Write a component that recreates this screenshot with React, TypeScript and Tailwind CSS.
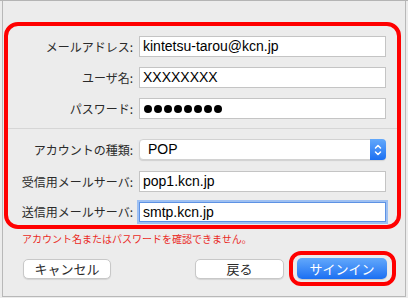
import React from "react";

const jp = "font-['Noto_Sans_CJK_JP','Noto_Sans',sans-serif]";
const lat = "font-['Liberation_Sans','Noto_Sans_CJK_JP',sans-serif]";

function Row({ label, children, mt }: { label: string; children: React.ReactNode; mt: string }) {
  return (
    <div className={`flex items-center ${mt}`}>
      <div className={`w-[125px] text-right text-[12px] leading-[14px] text-[#2a2a2a] ${jp}`}>{label}</div>
      <div className="ml-[6px]">{children}</div>
    </div>
  );
}

function Input({ children, focused, h = "h-[21px]" }: { children: React.ReactNode; focused?: boolean; h?: string }) {
  return (
    <div
      className={`w-[247px] ${h} bg-white flex items-center pl-[3px] text-[14px] text-black ${lat} ${
        focused ? "border border-[#5d92e4] ring-2 ring-[#9ec0f2]" : "border border-[#c4c4c4]"
      }`}
    >
      {children}
    </div>
  );
}

export default function App() {
  return (
    <div className="w-[408px] h-[298px] bg-[#ececec] border-t border-[#b4b4b4] overflow-hidden">
      <div className="ml-[2px] w-[404px] h-[296px] border-x border-b border-[#b8b8b8] flex flex-col">
        <div className="mt-[21px] ml-[1px] w-[397px] h-[207px] border-4 border-[#ff0000] rounded-[14px] flex flex-col pt-[10px]">
          <Row label="メールアドレス:" mt="">
            <Input>kintetsu-tarou@kcn.jp</Input>
          </Row>
          <Row label="ユーザ名:" mt="mt-[10px]">
            <Input>XXXXXXXX</Input>
          </Row>
          <Row label="パスワード:" mt="mt-[10px]">
            <Input>
              <div className="flex gap-[2px] pl-[1px]">
                {Array.from({ length: 8 }).map((_, i) => (
                  <span key={i} className="w-[8px] h-[8px] rounded-full bg-black" />
                ))}
              </div>
            </Input>
          </Row>
          <div className="mt-[9px] h-px bg-[#d6d6d6]" />
          <Row label="アカウントの種類:" mt="mt-[10px]">
            <div className="w-[247px] h-[21px] bg-white rounded-[4px] border border-[#d2d2d2] shadow-[0_1px_1px_rgba(0,0,0,0.12)] flex items-center justify-between">
              <span className={`pl-[8px] text-[14px] text-black ${lat}`}>POP</span>
              <div className="w-[16px] h-[21px] -mr-px rounded-r-[4px] bg-gradient-to-b from-[#62a8fb] to-[#1a6ff2] flex items-center justify-center">
                <svg width="10" height="14" viewBox="0 0 10 14" fill="none" stroke="white" strokeWidth="1.5" strokeLinecap="round" strokeLinejoin="round">
                  <path d="M2.5 5 L5 2.5 L7.5 5" />
                  <path d="M2.5 9 L5 11.5 L7.5 9" />
                </svg>
              </div>
            </div>
          </Row>
          <Row label="受信用メールサーバ:" mt="mt-[11px]">
            <Input>pop1.kcn.jp</Input>
          </Row>
          <Row label="送信用メールサーバ:" mt="mt-[10px]">
            <Input focused h="h-[20px]">smtp.kcn.jp</Input>
          </Row>
        </div>
        <div className={`mt-[4px] ml-[19px] text-[10px] leading-[12px] text-[#ea2a1f] ${jp}`}>
          アカウント名またはパスワードを確認できません。
        </div>
        <div className="mt-[6px] flex items-center">
          <div className={`ml-[20px] w-[88px] h-[20px] bg-white border border-[#c8c8c8] rounded-[5px] shadow-[0_1px_1px_rgba(0,0,0,0.1)] flex items-center justify-center text-[13px] text-[#2a2a2a] ${jp}`}>
            キャンセル
          </div>
          <div className="flex-1" />
          <div className={`w-[89px] h-[20px] bg-white border border-[#c8c8c8] rounded-[5px] shadow-[0_1px_1px_rgba(0,0,0,0.1)] flex items-center justify-center text-[13px] text-[#2a2a2a] ${jp}`}>
            戻る
          </div>
          <div className="ml-[5px] mr-[9px] w-[107px] h-[35px] border-4 border-[#ff0000] rounded-[12px] flex items-center pl-[4px]">
            <div className={`w-[90px] h-[21px] rounded-[5px] bg-gradient-to-b from-[#62a8fb] to-[#1a6ff2] shadow-[0_1px_1px_rgba(0,0,0,0.15)] flex items-center justify-center text-[13px] text-white ${jp}`}>
              サインイン
            </div>
          </div>
        </div>
      </div>
    </div>
  );
}
